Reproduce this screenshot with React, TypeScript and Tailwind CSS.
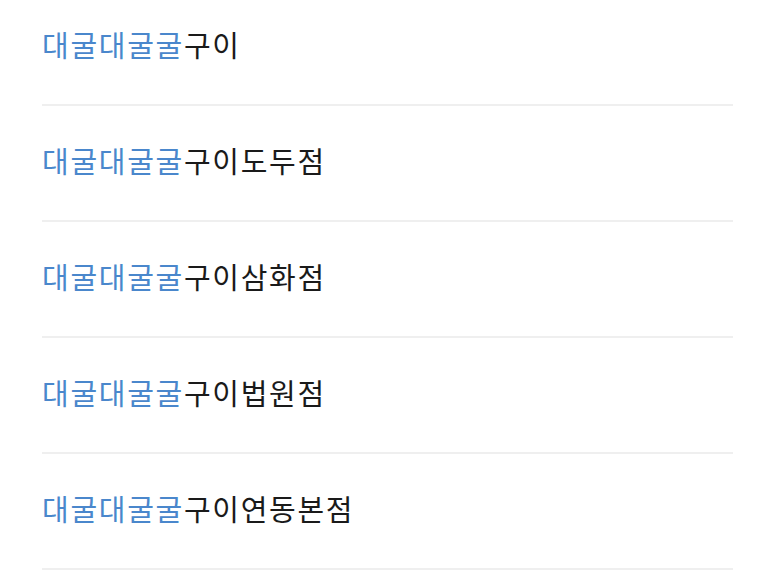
import React from 'react';

const stores = ['구이', '구이도두점', '구이삼화점', '구이법원점', '구이연동본점'];

export default function App() {
  return (
    <div className="w-[773px] h-[582px] overflow-hidden bg-white font-['Noto_Sans_CJK_KR','Noto_Sans',sans-serif]">
      <ul className="-mt-[10px] pl-[42px] pr-[40px]">
        {stores.map((name) => (
          <li
            key={name}
            className="h-[116px] pb-1 flex items-center border-b-2 border-[#efefef] text-[29px] text-[#1a1a1a] tracking-[1.7px]"
          >
            <span className="text-[#4a87cc]">대굴대굴굴</span>
            <span>{name}</span>
          </li>
        ))}
      </ul>
    </div>
  );
}
